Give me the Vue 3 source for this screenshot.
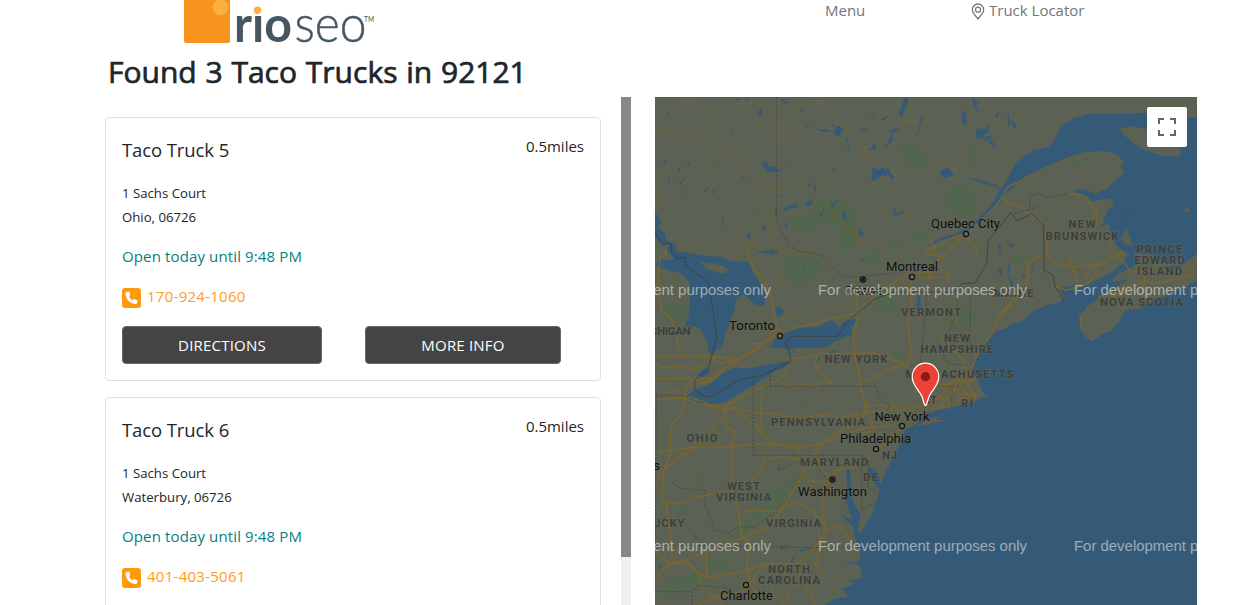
<script setup>
const trucks = [
  { name: 'Taco Truck 5', street: '1 Sachs Court', city: 'Ohio, 06726', phone: '170-924-1060' },
  { name: 'Taco Truck 6', street: '1 Sachs Court', city: 'Waterbury, 06726', phone: '401-403-5061' }
]

// Map geometry lives in a 1626 x 1524 space, three units to a pixel.
const water = [
  // Atlantic and the Gulf of St. Lawrence
  'M1626 62L1560 60 1470 48 1380 52 1300 50 1275 58 1255 62 1240 75 1220 84 1208 102 1204 122 1180 150 1135 160 1105 178 1080 200 1070 222 1048 262 1032 280 1020 308 985 350 940 392 895 412 850 425 812 450 860 430 940 402 985 370 1030 325 1052 288 1090 260 1140 225 1190 200 1240 180 1290 165 1350 162 1385 172 1402 190 1408 200 1396 205 1408 225 1396 240 1372 258 1362 272 1320 290 1296 280 1278 275 1252 284 1285 292 1305 315 1335 308 1375 304 1372 326 1355 342 1345 378 1330 388 1362 382 1372 430 1392 455 1420 470 1410 490 1390 510 1362 532 1300 560 1240 568 1212 570 1230 605 1215 615 1180 624 1140 640 1112 662 1092 676 1065 684 1050 695 1020 704 998 732 978 755 965 788 948 808 960 835 972 855 975 870 990 895 1015 900 1016 880 1006 865 1018 885 1018 896 970 904 958 916 930 920 890 932 850 940 810 950 780 972 750 998 738 1035 715 1080 688 1135 676 1162 670 1130 645 1108 636 1120 650 1150 674 1175 664 1215 652 1250 628 1290 612 1312 606 1298 618 1252 600 1225 584 1190 588 1150 584 1112 572 1120 578 1168 568 1195 578 1230 592 1268 566 1258 540 1230 572 1270 594 1290 600 1325 612 1350 618 1375 612 1392 560 1398 606 1400 622 1420 618 1444 575 1450 600 1460 560 1475 580 1500 536 1506 510 1524 1626 1524Z',
  // Huron, Ontario, Erie
  'M0 345L20 372 8 390 30 408 34 430 60 442 66 462 110 468 150 476 200 480 230 492 280 496 296 530 318 562 330 590 328 628 300 622 265 592 244 602 238 640 220 690 205 730 204 746 164 775 155 730 130 690 90 686 102 650 106 560 80 530 30 516 0 505 12 488 58 488 30 450 0 420Z',
  'M345 750L358 728 378 712 420 694 500 688 515 668 536 672 552 690 568 674 602 664 598 686 588 690 592 712 560 724 510 752 450 752 390 756Z',
  'M90 905L102 890 130 872 158 866 200 830 240 812 290 814 350 800 404 792 408 802 360 822 300 862 250 890 212 915 170 922 130 920Z',
  'M128 834L158 808 164 832 134 844Z', 'M362 628L378 630 388 645 374 660 362 652Z'
]
const islands = [
  'M1390 96L1430 88 1490 100 1580 160 1572 178 1530 178 1470 160 1430 135Z',
  'M1275 655L1298 628 1335 600 1370 574 1398 562 1420 548 1440 545 1366 555 1385 535 1450 500 1500 510 1570 515 1600 490 1626 470 1626 550 1580 575 1510 605 1455 634 1410 640 1398 665 1370 702 1340 712 1314 733 1294 722 1280 700Z',
  'M1400 420L1415 390 1424 420 1435 450 1410 438 1396 428Z',
  'M1435 466L1480 472 1540 500 1590 480 1570 505 1500 512 1450 494Z',
  'M1600 350L1585 340 1605 330Z', 'M1560 366L1578 352 1562 360Z',
  'M778 990L815 970 868 950 840 968 870 970 820 982Z',
  'M130 492L200 504 222 520 205 530 160 518Z'
]
const parks = [
  'M410 380L430 355 470 345 480 320 540 300 580 320 595 350 600 390 595 460 560 460 550 420 570 390 500 380 430 405Z',
  'M390 485L430 478 500 490 495 515 450 540 395 530Z', 'M635 490L650 455 675 460 665 500 640 510Z',
  'M700 450L720 430 748 445 720 460Z', 'M730 140L770 150 800 170 816 200 816 220 760 200Z',
  'M765 410L790 400 830 415 800 435 765 432Z', 'M870 300L890 270 940 268 962 292 945 330 950 355 920 365 880 340Z',
  'M945 155L965 150 970 190 955 208 942 190Z', 'M1245 195L1270 186 1298 188 1285 198 1245 202Z',
  'M180 200L205 205 200 220 178 215Z', 'M280 350L315 345 310 360Z', 'M410 230L425 230 422 245 410 242Z',
  'M390 489L480 489 490 540 440 565 400 550Z', 'M15 630L50 615 95 625 90 660 45 660Z',
  'M655 590L695 565 716 590 710 645 680 655 660 620Z', 'M880 650L930 620 962 650 950 680 900 695Z',
  'M1078 470L1094 470 1094 505 1078 505Z', 'M700 770L735 755 745 770 725 790Z',
  'M0 440L15 445 5 500 0 505Z', 'M430 1120L445 1135 390 1200 350 1240 320 1270 260 1310 225 1320 300 1250 330 1200 390 1160Z',
  'M40 1445L130 1430 150 1445 100 1480 60 1490 35 1510 15 1500Z', 'M150 1390L210 1380 218 1410 170 1425Z',
  'M525 1490L550 1485 552 1505 535 1504Z', 'M610 1410L623 1415 618 1430 606 1430Z', 'M60 1240L100 1225 90 1245 60 1265Z',
  'M120 1140L145 1130 150 1160 122 1165Z', 'M440 900L460 915 455 940 435 920Z'
]
const sand = [
  'M60 5L100 0 130 15 110 35 90 20Z', 'M160 40L190 30 195 48 170 65 158 55Z', 'M260 5L300 15 285 35 260 20Z',
  'M330 90L360 60 390 80 440 90 430 120 400 110 380 140 350 125Z', 'M470 10L510 5 505 25 480 30Z',
  'M510 80L560 70 600 90 560 115 510 110Z', 'M600 160L650 140 660 175 620 200 605 185Z', 'M740 65L790 55 795 80 740 85Z',
  'M670 60L690 50 700 70 680 90Z', 'M640 205L690 200 720 215 730 250 680 250 640 240Z', 'M850 190L910 205 905 235 870 245 850 225Z',
  'M545 272L575 268 570 278Z', 'M210 790L280 810 300 800 260 830Z', 'M20 880L70 870 90 900 30 900Z', 'M1440 43L1475 40 1470 54Z'
]
const ponds = [
  'M308 48L320 30 318 55ZM322 205L328 195 340 200 338 212 360 208 362 218 380 218 370 225 340 222Z',
  'M455 85L465 88 458 92ZM485 95L498 98 520 98 532 105 520 104 495 102ZM535 108L548 85 565 98 555 115 545 118Z',
  'M645 60L660 58 650 64ZM675 68L700 55 690 68ZM732 48L745 15 752 0 760 5 750 35 740 60ZM700 102L720 95 732 92 718 105Z',
  'M702 130L715 105 712 130 690 155ZM640 160L660 140 662 155ZM573 125L582 135 574 136ZM575 150L583 145 580 155Z',
  'M648 240L655 210 670 220 685 208 690 225 700 210 705 230 720 240 712 248 700 235 680 235 665 245 655 252Z',
  'M24 205L30 190 37 190 30 200ZM38 235L44 250 42 258ZM70 260L92 240 88 248 75 262ZM147 285L160 270 155 285ZM262 238L270 235 268 246Z',
  'M228 98L231 100 229 120ZM530 225L538 212 538 220ZM398 206L405 204 404 210ZM168 285L182 280 172 290ZM92 287L98 280 96 290Z',
  'M380 345L395 330 425 320 425 332 405 335ZM450 320L470 305 472 320 460 328ZM495 355L508 335 500 357ZM525 330L545 310 535 330ZM562 348L572 345 574 370 565 365Z',
  'M612 405L618 395 625 415 614 418ZM714 340L720 335 722 350 730 345 735 350 720 360ZM738 345L746 340 740 352ZM668 355L672 358 667 360Z',
  'M325 378L335 398 325 400ZM274 415L288 412 282 428ZM308 465L340 462 350 455 372 465 350 472ZM204 358L206 390 203 370ZM362 335L368 345 362 355Z',
  'M380 290L380 302 376 298ZM458 258L466 260 462 270ZM392 375L398 385 392 398ZM445 505L449 515 446 525ZM618 485L628 485 620 492ZM376 5L384 18 400 20 385 8Z',
  'M435 38L443 42 437 46ZM40 45L42 60 38 55ZM480 260L485 290 478 280ZM530 82L540 85 534 90ZM615 95L640 98 620 102ZM785 118L800 60 803 60 788 116Z',
  'M920 50L930 40 935 70 930 85 922 72ZM950 0L970 20 960 25 975 45 962 38 955 20ZM965 95L980 105 975 90 990 100 1000 85 1000 105 985 115 995 135 980 120 965 130ZM990 120L1010 115 1005 130 1030 150 1010 142 1020 155ZM1020 60L1032 40 1028 60ZM1058 45L1065 70 1062 90ZM1068 70L1080 80 1086 95 1075 90Z',
  'M855 220L880 213 892 225 895 235 870 243 858 235ZM1030 440L1038 450 1036 470ZM1056 430L1065 445 1078 440 1068 455ZM1030 520L1040 515 1038 540ZM1060 500L1066 515 1060 530ZM1060 535L1075 555 1070 570ZM1130 512L1135 500 1136 520ZM1100 530L1112 540 1106 545Z',
  'M400 770L420 760 416 766ZM480 790L495 780 490 795ZM520 765L545 762 525 768ZM530 760L532 790 528 775ZM786 608L792 590 797 620 790 645 784 630ZM640 1320L665 1310 645 1325ZM375 1350L400 1345 380 1358ZM435 1360L465 1352 440 1365ZM10 1400L20 1425 12 1415ZM120 1310L125 1325 118 1320ZM420 1372L410 1400 406 1395ZM110 1010L125 1012 112 1018Z',
  'M936 244L980 250 1020 264 1034 275 1010 265 970 254ZM270 0L280 8 276 12ZM240 10L255 0 250 8ZM70 220L78 205 74 225ZM100 205L104 195 102 210ZM30 505L42 510 32 514Z'
]
const roads = [
  'M0 107L60 107 120 122 180 145 225 158 240 178 262 182 275 200 280 225 312 248 315 275 350 320 352 360 345 412 365 440 372 465 375 530 385 560',
  'M320 278L350 275 375 272 390 266 445 265 470 278 510 280 512 305 525 335 570 390 610 430 660 436 690 460 700 478 740 485',
  'M60 455L120 470 190 470 240 455 280 440 330 445 370 462 420 460 490 475 530 505',
  'M0 270L5 300 0 330M372 545L352 560M388 650L440 670 530 640 600 600 680 590 760 560'
]
const highways = [
  'M272 446L285 490 300 520 330 550 345 590 356 630 358 660 372 700',
  'M35 440L32 470 15 485 10 540 12 585 20 640 50 665 65 720 75 778',
  'M0 776L160 778 250 785 300 760 348 722 385 705 430 690 490 678 540 662 605 648 640 615 690 575 735 545 760 530 816 525 850 525',
  'M345 735L350 700 380 700M285 740L320 740 345 725M0 800L30 812 70 808 120 820 145 800M165 778L200 800 245 786M120 842L165 845 200 820 240 795 300 755',
  'M120 845L140 860 170 850 210 815 250 790M120 842L95 868 88 905 80 950 50 985 45 1030 50 1065 28 1110 20 1190 35 1230 45 1300 50 1370 52 1400',
  'M0 845L60 845 110 842M0 908L90 903 130 920 210 928 250 905 320 868 380 845 400 810 410 785 460 780 490 770 540 770 600 768 660 768 690 780 730 795 755 810',
  'M487 770L480 800 500 830 530 860 495 858 490 870 450 862 420 870 380 862M598 560L605 580 610 660 595 710 600 780 615 840 620 880 630 925',
  'M600 865L650 845 700 815 755 805 770 770 765 740 760 690 770 620 765 580 770 530',
  'M100 900L150 915 170 930 210 938 235 930 290 945 360 950 430 965 490 955 530 950 550 965 600 955 650 945 730 940 780 930 825 912 880 900 930 850',
  'M210 930L215 990 240 1005 230 1050 232 1110 225 1165 250 1240 258 1310 280 1340 275 1410 285 1465',
  'M320 870L318 985 330 1015 320 1010 300 985 260 950 225 930M0 1065L60 1058 125 1050 220 1050 310 1040 380 1045 450 1050 530 1030 600 1000 650 990 720 985',
  'M125 1050L170 1000 200 965 220 930M0 1170L15 1130 60 1090 125 1050M20 1215L80 1220 125 1200 225 1180M250 1245L300 1240 360 1244 385 1230 430 1215 470 1240 505 1275 510 1305 540 1280 570 1305 590 1335',
  'M330 1020L360 1040 430 1055 455 1085 490 1110 530 1145 540 1120 600 1110 640 1080 690 1040 730 1000 780 980 815 940 870 930 930 900',
  'M630 925L620 980 620 1010 655 1000 640 960 635 925 680 925 730 930M600 950L620 980 560 1000 510 1035 480 1060 490 1110',
  'M330 1085L385 1080 460 1090 440 1135 410 1190 380 1240 340 1290 270 1320 220 1340 140 1370 60 1400 0 1425M290 1150L320 1110 330 1085M445 1140L480 1155 530 1150M530 1150L500 1180 502 1240 510 1280 505 1320 460 1370 430 1400 330 1400 300 1440 270 1480 180 1500 130 1524',
  'M0 1370L50 1400 90 1395 140 1435 170 1440 280 1420 330 1400 390 1430 430 1450M490 1310L500 1340 480 1400 510 1430M0 1450L40 1400 70 1395M100 1395L130 1430 140 1470 180 1500 200 1524M350 1470L350 1500M430 1460L400 1480 395 1510M440 1450L465 1490 480 1524M285 1465L320 1500 360 1500 390 1524M155 1370L155 1440',
  'M810 468L860 440 900 420 935 410 975 375 1020 330 1045 295M930 415L960 450 970 478M920 420L850 490 820 540M812 470L870 480M800 545L880 540M850 505L885 540 880 560M825 425L845 470',
  'M1045 290L1060 270 1100 250 1135 228M1045 305L1060 320 1090 325 1130 355 1160 375 1172 410 1178 470 1185 495 1250 510 1340 500 1380 475 1410 470M1115 530L1130 490 1160 475 1180 480',
  'M1240 290L1265 290 1300 305 1310 330 1325 345 1325 385M1380 475L1400 490 1430 525 1460 520 1470 548 1460 590M1375 470L1360 430M1250 510L1270 560M1290 545L1300 520 1340 500M1240 480L1250 510',
  'M1070 590L1110 595 1120 530 1115 489M1110 595L1070 610 1025 670 1010 710 985 745 965 780 950 815 930 850M1190 565L1235 580 1300 560 1330 520M1025 670L1070 620M810 830L850 870 910 850 960 850M840 840L860 870 890 860',
  'M920 840L880 900 850 930M930 850L965 900 940 895 920 870 890 870 810 930M900 760L930 800 935 840M840 700L860 720 885 760M895 590L905 640 900 680M780 890L815 870 860 870M910 890L965 895',
  'M1330 600L1380 580 1450 560 1470 550 1500 560 1560 545 1620 530M1275 655L1280 700M1590 530L1620 500M1410 590L1370 600 1450 575'
]
const borders = 'M364 0L364 350 370 385 400 440 425 460 500 475 520 500 560 535 600 540M600 540L720 528M4 895L0 1480M4 895L90 895M295 840L295 1075 620 1075 640 1090M346 835L346 868 665 868 670 900 705 925 690 960 690 975M1124 335L1124 300 1150 288 1180 302 1240 290M905 600L905 650 880 710 865 770 880 800 930 805 970 785M945 600L945 780M840 868L920 868M892 870L890 930M816 590L800 770 790 860 815 870M0 1345L220 1345 460 1352 610 1350M370 1090L370 1120 440 1090 480 1095 500 1130 530 1160M150 1225L180 1300 220 1310 250 1290 300 1290 360 1245 400 1200M0 1482L110 1485 130 1465 230 1475M110 1484L110 1524M640 1090L640 1175 670 1180M150 1225L150 1180 80 1175 50 1155M1424 343L1370 410 1400 450 1440 470M1078 350L1150 330M620 1075L620 1235 660 1220'
const solidBorders = 'M0 405L20 440 48 440 50 468 70 484 92 480 90 505 160 555 186 720 160 815 118 850 120 880 150 898 170 898 250 850 325 834 408 792 400 755 388 735 415 718 550 718 575 675 605 650 660 605 720 585 900 585 920 560 960 558 995 500 1000 430 1068 347 1085 372 1130 350 1166 385 1167 520 1195 535 1200 570 1220 595 1228 615'

const states = [
  ['NEW', 1082, 224, 27], ['BRUNSWICK', 1082, 235.5, 73], ['PRINCE', 1159.5, 249, 46], ['EDWARD', 1159.5, 260, 50], ['ISLAND', 1159.5, 271, 45],
  ['MAINE', 1013.5, 293, 40], ['NOVA SCOTIA', 1141.5, 302, 83], ['VERMONT', 931, 312, 60], ['NEW', 957, 338, 26], ['HAMPSHIRE', 957, 349, 73],
  ['NEW YORK', 856, 359, 63], ['MASSACHUSETTS', 959.5, 374, 108], ['CT', 930, 400, 14], ['RI', 967, 403, 12], ['MICHIGAN', 664, 331, 53],
  ['PENNSYLVANIA', 818, 422, 94], ['OHIO', 702, 438, 31], ['NJ', 889.5, 455, 15], ['DE', 870.5, 477, 15], ['MARYLAND', 834, 462, 68],
  ['WEST', 743.5, 486, 33], ['VIRGINIA', 743.5, 497, 55], ['VIRGINIA', 793.5, 523, 55], ['KENTUCKY', 653, 523, 63], ['NORTH', 789, 569, 42], ['CAROLINA', 789, 580, 62]
]
const cities = [
  ['Quebec City', 965.5, 223, 69, 966, 234], ['Montreal', 912, 266, 52, 912, 277], ['Ottawa', 864, 290, 39, 863, 279.5, true],
  ['Toronto', 752, 325, 46, 780, 336], ['New York', 902, 416, 55, 902, 426], ['Philadelphia', 875.5, 438, 71, 876, 449],
  ['Washington', 832.5, 491, 69, 832.5, 479.5, true], ['Charlotte', 746.5, 595, 53, 746, 585], ['Indianapolis', 623, 465, 74, 600, 460]
]
const notices = [[666.5, 290], [922.5, 290], [1178.5, 290], [666.5, 546], [922.5, 546], [1178.5, 546]]
</script>

<template>
  <div class="page">
    <header class="top">
      <svg class="logo" width="192" height="46" viewBox="184 0 192 46" role="img" aria-label="rio seo">
        <path d="M184 0H230V40.5Q230 43 227.500 43H186.500Q184 43 184 40.500Z" fill="#f7941f" />
        <circle cx="220.500" cy="7.500" r="7.800" fill="#fcb040" />
        <g fill="#465762">
          <text class="rio" x="234" y="42" textLength="58" lengthAdjust="spacingAndGlyphs">rio</text>
          <text class="seo" x="294.500" y="42" textLength="72" lengthAdjust="spacingAndGlyphs">seo</text>
          <text class="tm" x="364" y="21.500" textLength="10" lengthAdjust="spacingAndGlyphs">TM</text>
        </g>
        <rect x="252.500" y="2" width="10.500" height="12.500" fill="#fff" />
        <circle cx="257.600" cy="10.300" r="3.700" fill="#fcb040" />
      </svg>
      <nav class="nav">
        <a class="menu">Menu</a>
        <a class="locator">
          <svg width="14" height="18" viewBox="0 0 14 18" fill="none" stroke="#77797c" stroke-width="1.300">
            <path d="M7 16C5.800 13.800 1.300 10.300 1.300 6.700A5.700 5.700 0 0 1 12.700 6.700C12.700 10.300 8.200 13.800 7 16Z" />
            <circle cx="7" cy="6.700" r="2.500" />
          </svg>
          <span>Truck Locator</span>
        </a>
      </nav>
    </header>
    <h1>Found 3 Taco Trucks in 92121</h1>
    <main class="columns">
      <section class="list">
        <div class="cards">
          <article v-for="t in trucks" :key="t.name" class="card">
            <div class="head">
              <h2>{{ t.name }}</h2>
              <span class="miles">0.5miles</span>
            </div>
            <p class="address">{{ t.street }}<br>{{ t.city }}</p>
            <p class="hours">Open today until 9:48 PM</p>
            <a class="phone">
              <svg width="19" height="20" viewBox="0 0 19 20">
                <rect width="19" height="20" rx="3" fill="#ff9a0d" />
                <path d="M4.200 4.200L6.200 3.400Q7 3.300 7.300 4L8.200 6.200Q8.400 6.800 7.900 7.300L7 8.200Q8.100 10.800 10.700 12.200L11.700 11.300Q12.200 10.900 12.800 11.200L15 12.200Q15.700 12.500 15.500 13.200L15 15Q14.700 15.900 13.700 15.900C8 15.900 3.500 11 3.500 5.200Q3.500 4.500 4.200 4.200Z" fill="#fff" />
              </svg>
              <span>{{ t.phone }}</span>
            </a>
            <div class="actions">
              <button class="directions">DIRECTIONS</button>
              <button class="more">MORE INFO</button>
            </div>
          </article>
        </div>
        <div class="scroll"><div class="thumb"></div></div>
      </section>
      <section class="map">
        <svg width="542" height="508" viewBox="655 97 542 508">
          <rect x="655" y="97" width="542" height="508" fill="#5c6253" />
          <g transform="translate(655 97) scale(.33333)" stroke-linejoin="round">
            <path v-for="d in sand" :key="d" :d="d" fill="#616251" />
            <path v-for="d in parks" :key="d" :d="d" fill="#52654d" />
            <path v-for="d in water" :key="d" :d="d" fill="#355a77" />
            <path v-for="d in islands" :key="d" :d="d" fill="#5c6253" />
            <path v-for="d in ponds" :key="d" :d="d" fill="#355a77" stroke="#355a77" stroke-width="1.500" />
            <path v-for="d in roads" :key="d" :d="d" fill="none" stroke="#71602f" stroke-width="3" />
            <path v-for="d in highways" :key="d" :d="d" fill="none" stroke="#7b652f" stroke-width="4.500" />
            <path :d="borders" fill="none" stroke="#3e433d" stroke-width="2.500" stroke-dasharray="6 5" />
            <path :d="solidBorders" fill="none" stroke="#3d4244" stroke-width="3" />
          </g>
          <g class="state">
            <text v-for="([name, x, y, w], i) in states" :key="i" :x="x - w / 2" :y="y + 4" :textLength="w">{{ name }}</text>
          </g>
          <g v-for="[name, x, y, w, dx, dy, capital] in cities" :key="name" class="city">
            <circle :cx="dx" :cy="dy" r="2.600" fill="#656a5c" stroke="#111" stroke-width="1.200" />
            <circle v-if="capital" :cx="dx" :cy="dy" r="1.500" fill="#111" />
            <text :x="x - w / 2" :y="y + 4.600" :textLength="w" lengthAdjust="spacingAndGlyphs">{{ name }}</text>
          </g>
          <g class="notice">
            <text v-for="([x, y], i) in notices" :key="i" :x="x - 104.500" :y="y + 5" textLength="209" lengthAdjust="spacingAndGlyphs">For development purposes only</text>
          </g>
          <path d="M925.500 405.500C923.800 405.500 923.900 400.500 921.500 395.500C918.500 389.300 912.200 385.300 912.200 376.500A13.300 13.300 0 0 1 938.800 376.500C938.800 385.300 932.500 389.300 929.500 395.500C927.100 400.500 927.200 405.500 925.500 405.500Z" fill="#ea4335" stroke="#fff" stroke-width="1.200" />
          <circle cx="925.500" cy="376.700" r="4.600" fill="#8b1a13" />
        </svg>
        <button class="fullscreen" aria-label="Toggle fullscreen view">
          <svg width="18" height="18" viewBox="0 0 18 18"><path d="M0 0H6V2H2V6H0ZM12 0H18V6H16V2H12ZM0 12H2V16H6V18H0ZM16 12H18V18H12V16H16Z" fill="#666" /></svg>
        </button>
      </section>
    </main>
  </div>
</template>

<style>
html, body { overflow: hidden; background: #fff; }
</style>

<style scoped>
* { box-sizing: border-box; }
.page { width: 1243px; height: 605px; overflow: hidden; color: #212529; font: 15px/24px "Open Sans", "Noto Sans", sans-serif; }
.top { display: flex; height: 46px; padding-left: 184px; }
.logo { flex: none; }
.rio { font: 700 50px Lato, sans-serif; }
.seo { font: 300 51px Lato, sans-serif; stroke: #465762; stroke-width: .5px; }
.tm { font: 7px Lato, sans-serif; }
.nav { display: flex; color: #727579; }
.menu { width: 147px; margin-left: 449px; line-height: 20px; }
.locator { display: flex; gap: 4px; line-height: 20px; }
.locator svg { flex: none; margin-top: 3px; margin-left: -1px; }
h1 { height: 51px; margin: 0; padding: 7px 0 0 108px; font-size: 30px; font-weight: 400; line-height: 38px; white-space: nowrap; word-spacing: 1px; -webkit-text-stroke: .7px #212529; }
.columns { display: flex; height: 508px; padding-left: 105px; }
.list { display: flex; width: 526px; overflow: hidden; }
.cards { display: flex; flex-direction: column; gap: 16px; width: 496px; padding-top: 20px; }
.card { flex: none; height: 264px; padding: 16px; border: 1px solid #dfdfdf; border-radius: 4px; }
.head { display: flex; justify-content: space-between; height: 47px; }
h2 { margin: 4px 0 0; font-size: 18.500px; font-weight: 400; line-height: 24px; letter-spacing: -.1px; }
.miles { line-height: 25px; }
.address { height: 48px; margin: 0; font-size: 13.200px; line-height: 24px; }
.hours { margin: 15px 0 16px; color: #078080; letter-spacing: .13px; }
.phone { display: flex; gap: 6px; height: 24px; color: #ff9a1f; letter-spacing: .27px; }
.phone svg { margin-top: 4px; }
.actions { display: flex; gap: 43px; margin-top: 18px; }
.actions button { height: 38px; padding: 0; border: 1px solid #5f6871; border-radius: 4px; background: #444; color: #fff; font: 15px/24px "Open Sans", sans-serif; letter-spacing: .2px; }
.directions { width: 200px; }
.more { width: 196px; }
.scroll { width: 10px; margin-left: 20px; background: #f1f1f1; }
.thumb { height: 460px; background: #888; }
.map { position: relative; width: 542px; height: 508px; margin-left: 24px; overflow: hidden; }
.map > svg { display: block; }
.state { font: 700 11.300px Roboto, sans-serif; fill: #3c3f3b; stroke: #666a5c; stroke-opacity: .5; stroke-width: 1.500px; paint-order: stroke; }
.city text { font: 12.700px Roboto, sans-serif; fill: #0d0e0d; stroke: #686c5d; stroke-opacity: .5; stroke-width: 1.500px; paint-order: stroke; }
.notice { font: 15px "Liberation Sans", sans-serif; fill: #fff; fill-opacity: .5; }
.fullscreen { position: absolute; top: 10px; right: 10px; display: grid; place-items: center; width: 40px; height: 40px; padding: 0; border: 0; border-radius: 2px; background: #fff; }
</style>
